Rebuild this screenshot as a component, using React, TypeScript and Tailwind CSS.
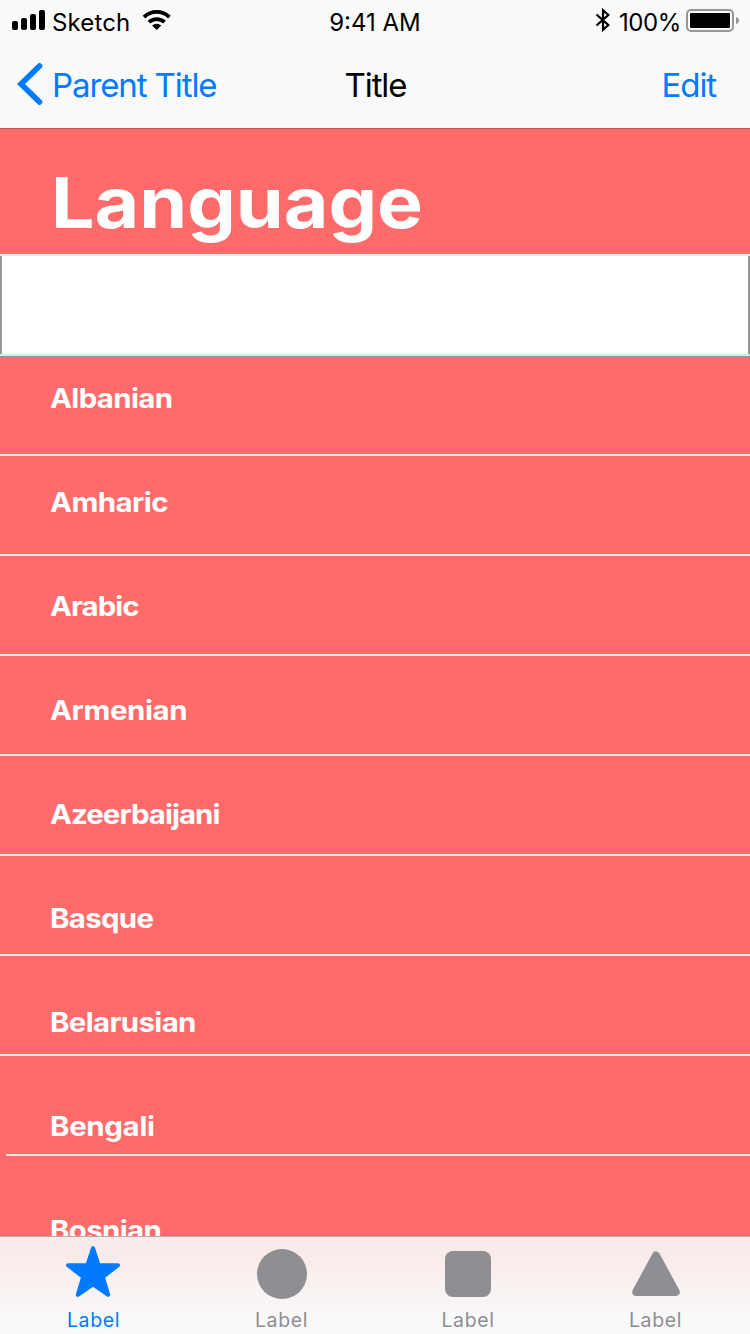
const languages = [
  { name: "Albanian", tracking: "tracking-[-0.6px]" },
  { name: "Amharic", tracking: "tracking-[-0.5px]" },
  { name: "Arabic", tracking: "tracking-[-0.9px]" },
  { name: "Armenian", tracking: "tracking-[-0.35px]" },
  { name: "Azeerbaijani", tracking: "tracking-[-0.9px]" },
  { name: "Basque", tracking: "tracking-[-0.65px]" },
  { name: "Belarusian", tracking: "tracking-[-0.6px]" },
  { name: "Bengali", tracking: "tracking-[-0.3px]" },
  { name: "Bosnian", tracking: "tracking-[-0.6px]" },
];

function StatusBar() {
  return (
    <div className="grid h-10 grid-cols-[1fr_auto_1fr] items-center text-[24px] leading-none text-black">
      <div className="flex h-10 items-center pl-3">
        <svg width="34" height="20" viewBox="0 0 34 20" className="shrink-0">
          <rect x="0" y="11" width="6" height="9" rx="2" />
          <rect x="9" y="8" width="6" height="12" rx="2" />
          <rect x="18" y="4" width="6" height="16" rx="2" />
          <rect x="27" y="0" width="6" height="20" rx="2" />
        </svg>
        <span className="w-[96px] pt-[6px] pl-[6px] tracking-[0.15px]">Sketch</span>
        <svg width="30" height="21" viewBox="0 0 30 21" className="shrink-0">
          <g fill="none" stroke="#000" strokeWidth="3.8">
            <path d="M2 7.1a18.2 18.2 0 0 1 25.4 0" />
            <path d="M6.9 12.2a11.2 11.2 0 0 1 15.6 0" />
          </g>
          <path d="M14.7 20l-4.6-4.5a6.6 6.6 0 0 1 9.2 0z" />
        </svg>
      </div>
      <span className="pt-[6px]">9:41 AM</span>
      <div className="flex h-10 items-center justify-end pr-[11px]">
        <svg width="16" height="26" viewBox="0 0 16 26" className="mr-[1px] shrink-0">
          <path d="M1.500 7.500L13.300 18 8 22.800V3.200L13.300 8 1.500 18.500" fill="none" stroke="#000" strokeWidth="2.200" />
        </svg>
        <span className="w-[74px] pt-[6px] pl-[7px] tracking-[-0.4px]">100%</span>
        <svg width="53" height="24" viewBox="0 0 53 24" className="mt-[2px] shrink-0">
          <rect x="1" y="1" width="46" height="21" rx="4" fill="none" stroke="#979797" strokeWidth="2" />
          <rect x="4" y="4" width="40" height="15" rx="1" />
          <path d="M50 8c2 .6 3 1.800 3 3.500s-1 2.900-3 3.500z" fill="#979797" />
        </svg>
      </div>
    </div>
  );
}

function NavBar() {
  return (
    <div className="grid h-[88px] grid-cols-[1fr_auto_1fr] items-center text-[33px] leading-[34px] tracking-[-1.1px]">
      <div className="flex items-center pl-[17px] text-[#007aff]">
        <svg width="26" height="42" viewBox="0 0 26 42" className="shrink-0">
          <path d="M22.500 3L4 21l18.500 18" fill="none" stroke="currentColor" strokeWidth="5.600" strokeLinecap="round" />
        </svg>
        <span className="pt-[2px] pl-[9px] whitespace-nowrap">Parent Title</span>
      </div>
      <span className="pt-[2px] pl-[1px] text-black">Title</span>
      <span className="justify-self-end pt-[2px] pr-[34px] text-[#007aff]">Edit</span>
    </div>
  );
}

function LanguageList() {
  return (
    <div className="grid h-[982px] overflow-hidden">
      <div className="col-start-1 row-start-1">
        <div className="h-[104px] border-2 border-[#979797] bg-white" />
        {languages.map(({ name, tracking }) => (
          <div key={name} className="flex h-[104px] items-start pt-[24px] pl-[50px]">
            <span className={`origin-left scale-x-[1.07] text-[27.5px] leading-[32px] font-bold text-white ${tracking}`}>{name}</span>
          </div>
        ))}
      </div>
      <div className="col-start-1 row-start-1">
        {languages.map(({ name }) => (
          <div key={name} className="h-[100px] border-t-2 border-[#e5e5e5]" />
        ))}
        <div className="ml-[6px] h-[82px] border-t-2 border-[#e5e5e5]" />
      </div>
    </div>
  );
}

function TabBar() {
  return (
    <nav className="grid h-[98px] grid-cols-[187px_188px_186px_189px] border-t border-[#b8abab] bg-linear-to-b from-[#f9ebea] from-20% to-[#f9f9f9] to-85% text-[19.5px] leading-[20px] tracking-[0.6px] text-[#8e8e93]">
      <div className="flex flex-col items-center text-[#007aff]">
        <svg width="56" height="54" viewBox="0 0 56 54" className="mt-[8px] mr-[1px]">
          <path d="M28 3.200L33.600 20.200H53L37.900 32 43.200 49.800 28 39.300 12.800 49.800 18.100 32 3 20.200H22.400z" fill="currentColor" stroke="currentColor" strokeWidth="4" strokeLinejoin="round" />
        </svg>
        <span className="pt-[11px]">Label</span>
      </div>
      <div className="flex flex-col items-center">
        <div className="mt-[12px] ml-[2px] size-[50px] rounded-full bg-[#8e8e93]" />
        <span className="pt-[11px] pl-[1px]">Label</span>
      </div>
      <div className="flex flex-col items-center">
        <div className="mt-[14px] size-[46px] rounded-[8px] bg-[#8e8e93]" />
        <span className="pt-[13px]">Label</span>
      </div>
      <div className="flex flex-col items-center">
        <svg width="50" height="46" viewBox="0 0 50 46" className="mt-[14px]">
          <path d="M25 4.500L44.800 41H5.200z" fill="currentColor" stroke="currentColor" strokeWidth="8" strokeLinejoin="round" />
        </svg>
        <span className="pt-[13px]">Label</span>
      </div>
    </nav>
  );
}

export default function App() {
  return (
    <div className="flex h-[1334px] w-[750px] flex-col overflow-hidden bg-[#ff6b6a] font-['Inter',sans-serif]">
      <header className="h-[129px] shrink-0 border-b border-[#c05555] bg-[#f9f9f9]">
        <StatusBar />
        <NavBar />
      </header>
      <h1 className="flex h-[125px] shrink-0 pt-[31px] pl-[51px] text-[70px] leading-[85px] font-bold text-white">
        <span className="origin-left scale-x-[1.1]">Language</span>
      </h1>
      <LanguageList />
      <TabBar />
    </div>
  );
}
